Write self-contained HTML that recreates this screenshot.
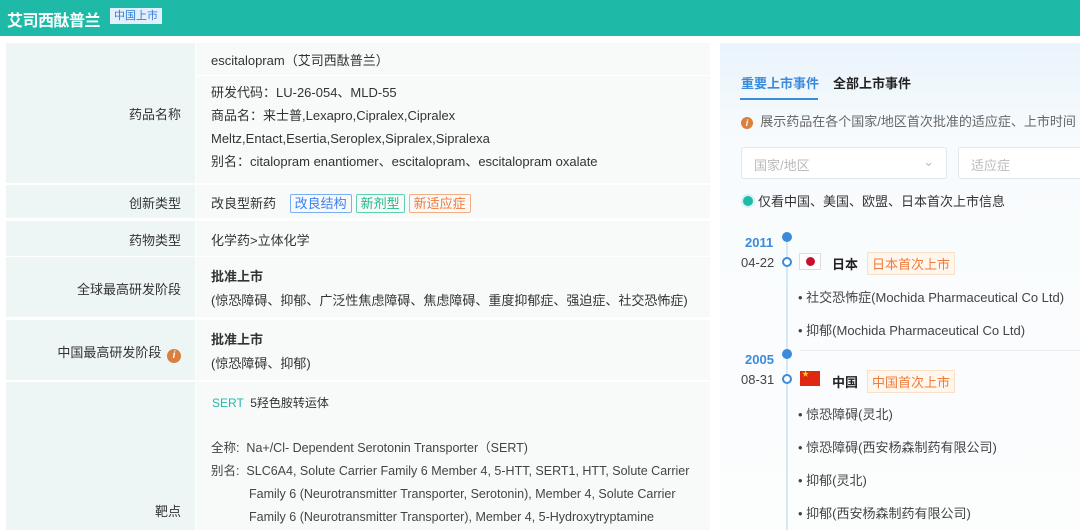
<!DOCTYPE html>
<html><head><meta charset="utf-8"><style>
*{margin:0;padding:0;box-sizing:border-box}
body{width:1080px;height:530px;overflow:hidden;background:#fff;font-family:"Liberation Sans","Noto Sans CJK SC",sans-serif;font-size:13px;color:#333;position:relative}
.a{position:absolute;white-space:nowrap}
.hd{left:0;top:0;width:1080px;height:36px;background:#1fb9a8}
.lab{background:#eef5f5;position:absolute;left:6px;width:189px}
.val{background:#f8f9f9;position:absolute;left:196px;width:514px}
.lt{position:absolute;right:14px;color:#333;font-size:13px}
.tag{display:inline-block;border:1px solid;border-radius:2px;padding:0 4px;font-size:13px;line-height:17px;margin-left:4px}
</style></head><body>
<div class="a hd"></div>
<div class="a" style="left:7px;top:7px;color:#fff;font-size:16px;font-weight:bold;letter-spacing:-0.5px">艾司西酞普兰</div>
<div class="a" style="left:110px;top:8px;background:#e3effc;color:#2f7fd8;font-size:11px;padding:0 4px;line-height:16px">中国上市</div>

<div class="lab" style="top:43px;height:140px"><span class="lt" style="top:61px">药品名称</span></div>
<div class="val" style="top:43px;height:32px"></div>
<div class="val" style="top:76px;height:107px"></div>
<div class="a" style="left:211px;top:50px">escitalopram（艾司西酞普兰）</div>
<div class="a" style="left:211px;top:81px;line-height:23px">研发代码：LU-26-054、MLD-55<br>商品名：来士普,Lexapro,Cipralex,Cipralex<br>Meltz,Entact,Esertia,Seroplex,Sipralex,Sipralexa<br>别名：citalopram enantiomer、escitalopram、escitalopram oxalate</div>

<div class="lab" style="top:185px;height:33px"><span class="lt" style="top:8px">创新类型</span></div>
<div class="val" style="top:185px;height:33px"></div>
<div class="a" style="left:211px;top:193px">改良型新药 <span class="tag" style="color:#3b82f6;border-color:#7aaef5;margin-left:10px">改良结构</span><span class="tag" style="color:#1fb88a;border-color:#5fd1ad">新剂型</span><span class="tag" style="color:#f07a3a;border-color:#f5ae82">新适应症</span></div>

<div class="lab" style="top:221px;height:35px"><span class="lt" style="top:9px">药物类型</span></div>
<div class="val" style="top:221px;height:35px"></div>
<div class="a" style="left:211px;top:230px">化学药&gt;立体化学</div>

<div class="lab" style="top:257px;height:60px"><span class="lt" style="top:22px">全球最高研发阶段</span></div>
<div class="val" style="top:257px;height:60px"></div>
<div class="a" style="left:211px;top:266px;font-weight:bold">批准上市</div>
<div class="a" style="left:211px;top:290px">(惊恐障碍、抑郁、广泛性焦虑障碍、焦虑障碍、重度抑郁症、强迫症、社交恐怖症)</div>

<div class="lab" style="top:320px;height:60px"><span class="lt" style="top:22px">中国最高研发阶段 <span style="display:inline-block;width:14px;height:14px;border-radius:50%;background:#d98040;color:#fff;font-size:10px;text-align:center;line-height:14px;font-style:italic;font-weight:bold;vertical-align:-1px;margin-left:2px">i</span></span></div>
<div class="val" style="top:320px;height:60px"></div>
<div class="a" style="left:211px;top:329px;font-weight:bold">批准上市</div>
<div class="a" style="left:211px;top:353px">(惊恐障碍、抑郁)</div>

<div class="lab" style="top:382px;height:148px"><span class="lt" style="top:119px">靶点</span></div>
<div class="val" style="top:382px;height:148px"></div>
<div class="a" style="left:212px;top:394px;font-size:12px"><span style="color:#1fb9a8">SERT</span> &nbsp;5羟色胺转运体</div>
<div class="a" style="left:211px;top:437px;line-height:23px;color:#444;font-size:12.5px">全称: &nbsp;Na+/Cl- Dependent Serotonin Transporter（SERT)<br>别名: &nbsp;SLC6A4, Solute Carrier Family 6 Member 4, 5-HTT, SERT1, HTT, Solute Carrier<br><span style="padding-left:38px">Family 6 (Neurotransmitter Transporter, Serotonin), Member 4, Solute Carrier</span><br><span style="padding-left:38px">Family 6 (Neurotransmitter Transporter), Member 4, 5-Hydroxytryptamine</span></div>

<div class="a" style="left:720px;top:43px;width:360px;height:487px;background:linear-gradient(#eaf4fc,#f8fbfd 100px,#fcfdfd)"></div>
<div class="a" style="left:741px;top:73px;color:#3a8bdc;font-weight:bold">重要上市事件</div>
<div class="a" style="left:740px;top:98px;width:78px;height:2px;background:#3a8bdc"></div>
<div class="a" style="left:833px;top:73px;font-weight:bold;color:#222">全部上市事件</div>
<div class="a" style="left:741px;top:111px;color:#666"><span style="display:inline-block;width:12px;height:12px;border-radius:50%;background:#d98040;color:#fff;font-size:9px;text-align:center;line-height:12px;font-weight:bold;font-style:italic">i</span> &nbsp;展示药品在各个国家/地区首次批准的适应症、上市时间</div>
<div class="a" style="left:741px;top:147px;width:206px;height:32px;border:1px solid #e2e6ea;border-radius:3px;background:#fff;color:#bbb;padding:7px 12px">国家/地区<span style="position:absolute;right:12px;top:6px;color:#bbb">&#8964;</span></div>
<div class="a" style="left:958px;top:147px;width:130px;height:32px;border:1px solid #e2e6ea;border-radius:3px;background:#fff;color:#bbb;padding:7px 12px">适应症</div>
<div class="a" style="left:741px;top:191px"><span style="display:inline-block;width:14px;height:14px;border-radius:50%;background:#1fb9a8;border:2px solid #d8f3ef;vertical-align:-2px;margin-right:3px"></span>仅看中国、美国、欧盟、日本首次上市信息</div>

<div class="a" style="left:786px;top:238px;width:2px;height:292px;background:#d6e8f5"></div>
<div class="a" style="left:782px;top:232px;width:10px;height:10px;border-radius:50%;background:#3a8bdc"></div>
<div class="a" style="left:745px;top:235px;color:#3a8bdc;font-weight:bold">2011</div>
<div class="a" style="left:741px;top:255px;color:#444">04-22</div>
<div class="a" style="left:782px;top:257px;width:10px;height:10px;border-radius:50%;border:2px solid #3a8bdc;background:#fff"></div>
<div class="a" style="left:799px;top:253px;width:22px;height:17px;border:1px solid #ddd;background:#fff"><div style="width:9px;height:9px;border-radius:50%;background:#c8102e;margin:3px auto"></div></div>
<div class="a" style="left:832px;top:254px;font-weight:bold;color:#222">日本</div>
<div class="a" style="left:867px;top:252px;background:#fff6ee;border:1px solid #fbe0c8;color:#f07a3a;padding:1px 4px">日本首次上市</div>
<div class="a" style="left:798px;top:287px;color:#444">• 社交恐怖症(Mochida Pharmaceutical Co Ltd)</div>
<div class="a" style="left:798px;top:320px;color:#444">• 抑郁(Mochida Pharmaceutical Co Ltd)</div>
<div class="a" style="left:800px;top:350px;width:280px;height:1px;background:#eceff1"></div>
<div class="a" style="left:782px;top:349px;width:10px;height:10px;border-radius:50%;background:#3a8bdc"></div>
<div class="a" style="left:745px;top:352px;color:#3a8bdc;font-weight:bold">2005</div>
<div class="a" style="left:741px;top:372px;color:#444">08-31</div>
<div class="a" style="left:782px;top:374px;width:10px;height:10px;border-radius:50%;border:2px solid #3a8bdc;background:#fff"></div>
<div class="a" style="left:800px;top:371px;width:20px;height:15px;background:#de2910;color:#ffde00;font-size:7px;line-height:8px;padding-left:2px">★</div>
<div class="a" style="left:832px;top:372px;font-weight:bold;color:#222">中国</div>
<div class="a" style="left:867px;top:370px;background:#fff6ee;border:1px solid #fbe0c8;color:#f07a3a;padding:1px 4px">中国首次上市</div>
<div class="a" style="left:798px;top:404px;color:#444">• 惊恐障碍(灵北)</div>
<div class="a" style="left:798px;top:437px;color:#444">• 惊恐障碍(西安杨森制药有限公司)</div>
<div class="a" style="left:798px;top:470px;color:#444">• 抑郁(灵北)</div>
<div class="a" style="left:798px;top:503px;color:#444">• 抑郁(西安杨森制药有限公司)</div>
</body></html>
